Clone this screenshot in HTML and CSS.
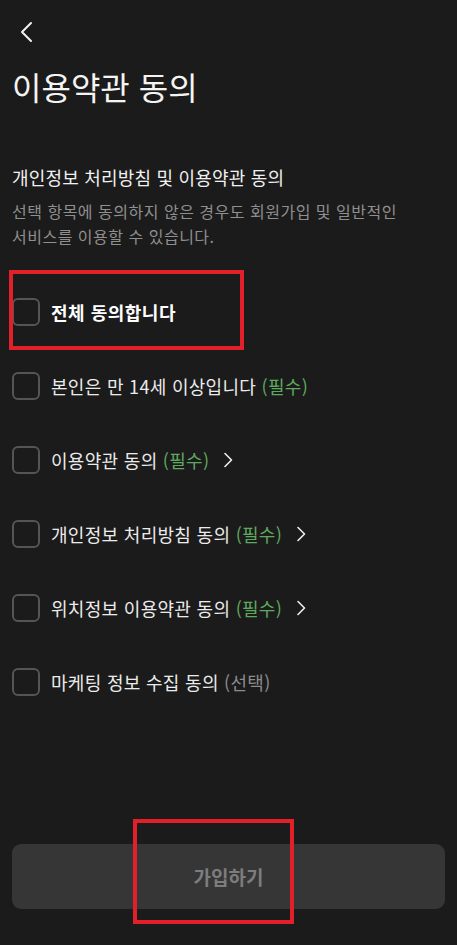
FILE: index.html
```html
<!DOCTYPE html>
<html lang="ko">
<head>
    <meta charset="UTF-8">
    <meta name="viewport" content="width=device-width, initial-scale=1.0">
    <title>이용약관 동의</title>
    <link rel="stylesheet" href="styles.css">
</head>
<body>

    <div class="page">
        <div class="top-bar">
            <button class="back-btn" aria-label="뒤로">
                <svg width="14" height="22" viewBox="0 0 14 22">
                    <path d="M12 2 L3 11 L12 20" fill="none" stroke="#f2f2f2" stroke-width="2" stroke-linecap="round" stroke-linejoin="round"/>
                </svg>
            </button>
        </div>

        <h1 class="title">이용약관 동의</h1>

        <h3 class="section-title">개인정보 처리방침 및 이용약관 동의</h3>
        <p class="desc">선택 항목에 동의하지 않은 경우도 회원가입 및 일반적인 서비스를 이용할 수 있습니다.</p>

        <ul class="agree-list">
            <li class="agree-item all">
                <span class="check"></span>
                <span class="label">전체 동의합니다</span>
            </li>
            <li class="agree-item">
                <span class="check"></span>
                <span class="label">본인은 만 14세 이상입니다 <em class="req">(필수)</em></span>
            </li>
            <li class="agree-item">
                <span class="check"></span>
                <span class="label">이용약관 동의 <em class="req">(필수)</em></span>
                <svg class="more" width="10" height="16" viewBox="0 0 10 16"><path d="M2 1.5 L8.5 8 L2 14.5" fill="none" stroke="#eee" stroke-width="1.6" stroke-linecap="round" stroke-linejoin="round"/></svg>
            </li>
            <li class="agree-item">
                <span class="check"></span>
                <span class="label">개인정보 처리방침 동의 <em class="req">(필수)</em></span>
                <svg class="more" width="10" height="16" viewBox="0 0 10 16"><path d="M2 1.5 L8.5 8 L2 14.5" fill="none" stroke="#eee" stroke-width="1.6" stroke-linecap="round" stroke-linejoin="round"/></svg>
            </li>
            <li class="agree-item">
                <span class="check"></span>
                <span class="label">위치정보 이용약관 동의 <em class="req">(필수)</em></span>
                <svg class="more" width="10" height="16" viewBox="0 0 10 16"><path d="M2 1.5 L8.5 8 L2 14.5" fill="none" stroke="#eee" stroke-width="1.6" stroke-linecap="round" stroke-linejoin="round"/></svg>
            </li>
            <li class="agree-item">
                <span class="check"></span>
                <span class="label">마케팅 정보 수집 동의 <em class="opt">(선택)</em></span>
            </li>
        </ul>

        <div class="bottom">
            <button class="join-btn" disabled>가입하기</button>
        </div>

        <!-- red annotation boxes over the screenshot -->
        <div class="mark mark-all"></div>
        <div class="mark mark-join"></div>
    </div>

</body>
</html>
```

FILE: styles.css
```css
body {
    margin: 0;
    background: #1b1b1b;
    font-family: 'Noto Sans CJK KR', 'Noto Sans', sans-serif;
    color: #ececec;
}
.page {
    position: relative;
    height: 945px;
    padding: 0 12px;
    box-sizing: border-box;
    display: flex;
    flex-direction: column;
}
.top-bar {
    height: 64px;
    display: flex;
    align-items: center;
}
.back-btn {
    background: none;
    border: none;
    padding: 0;
    margin-left: 7px;
    width: 20px;
    height: 24px;
    display: flex;
    align-items: center;
    cursor: pointer;
}
.title {
    margin: 0;
    font-size: 32px;
    font-weight: 400;
    line-height: 44px;
    color: #f4f4f4;
}
.section-title {
    margin: 57px 0 0;
    font-size: 18px;
    font-weight: 400;
    line-height: 25px;
    letter-spacing: 0.2px;
    color: #f0f0f0;
}
.desc {
    margin: 9px 0 0;
    max-width: 400px;
    font-size: 16px;
    line-height: 25px;
    letter-spacing: 0.5px;
    word-break: keep-all;
    color: #8f8f8f;
}
.agree-list {
    list-style: none;
    margin: 26px 0 0;
    padding: 0;
}
.agree-item {
    height: 74px;
    display: flex;
    align-items: center;
    gap: 11px;
    font-size: 18px;
    letter-spacing: 0.3px;
    color: #ebebeb;
}
.check {
    width: 24px;
    height: 24px;
    border: 2px solid #555;
    border-radius: 6px;
    flex-shrink: 0;
}
.agree-item.all .label {
    font-weight: 700;
    letter-spacing: 0.5px;
    color: #fff;
}
.req {
    font-style: normal;
    color: #5fa85f;
}
.opt {
    font-style: normal;
    color: #8c8c8c;
}
.more {
    margin-left: 3px;
}
.bottom {
    margin-top: auto;
    padding-bottom: 36px;
}
.join-btn {
    width: 100%;
    height: 65px;
    border: none;
    border-radius: 9px;
    background: #363636;
    color: #7d7d7d;
    font-family: inherit;
    font-size: 19px;
    font-weight: 700;
}
.mark {
    position: absolute;
    border: 4px solid #e3202a;
    box-sizing: border-box;
}
.mark-all {
    left: 9px;
    top: 270px;
    width: 235px;
    height: 80px;
}
.mark-join {
    left: 133px;
    top: 819px;
    width: 161px;
    height: 105px;
}
```
